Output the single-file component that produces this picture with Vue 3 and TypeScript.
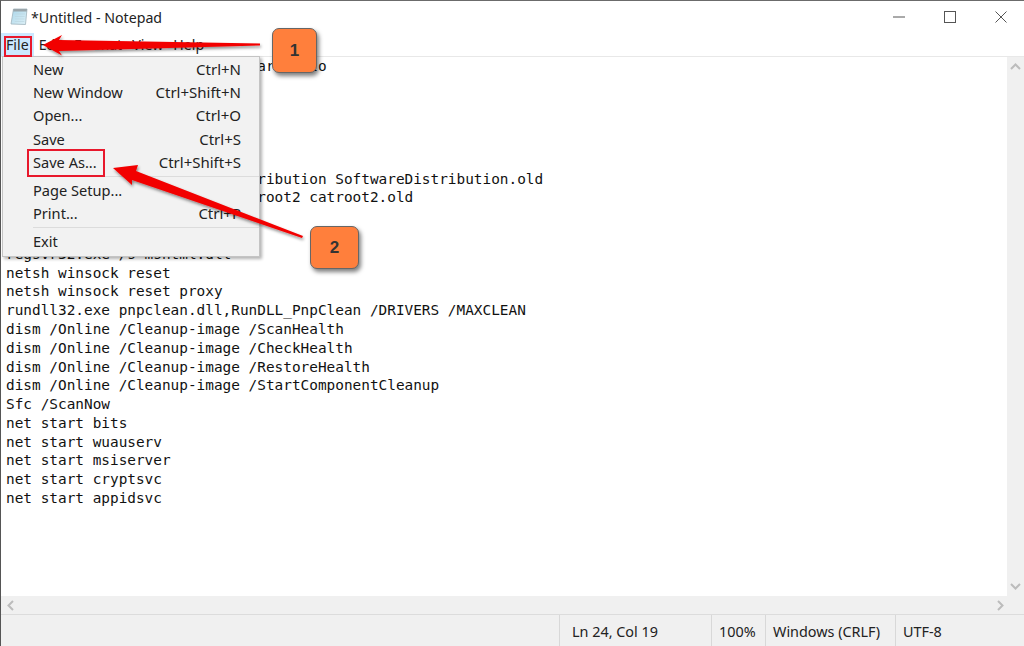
<script setup lang="ts">
const lines: string[] = [
  'SC config trustedinstaller start=auto',
  'net stop bits',
  'net stop wuauserv',
  'net stop msiserver',
  'net stop cryptsvc',
  'net stop appidsvc',
  'Ren %Systemroot%\\SoftwareDistribution SoftwareDistribution.old',
  'Ren %Systemroot%\\System32\\catroot2 catroot2.old',
  'regsvr32.exe /s atl.dll',
  'regsvr32.exe /s urlmon.dll',
  'regsvr32.exe /s mshtml.dll',
  'netsh winsock reset',
  'netsh winsock reset proxy',
  'rundll32.exe pnpclean.dll,RunDLL_PnpClean /DRIVERS /MAXCLEAN',
  'dism /Online /Cleanup-image /ScanHealth',
  'dism /Online /Cleanup-image /CheckHealth',
  'dism /Online /Cleanup-image /RestoreHealth',
  'dism /Online /Cleanup-image /StartComponentCleanup',
  'Sfc /ScanNow',
  'net start bits',
  'net start wuauserv',
  'net start msiserver',
  'net start cryptsvc',
  'net start appidsvc',
]
const menus: string[] = ['File', 'Edit', 'Format', 'View', 'Help']
interface Item { label: string; key?: string; sep?: boolean }
const items: Item[] = [
  { label: 'New', key: 'Ctrl+N' },
  { label: 'New Window', key: 'Ctrl+Shift+N' },
  { label: 'Open...', key: 'Ctrl+O' },
  { label: 'Save', key: 'Ctrl+S' },
  { label: 'Save As...', key: 'Ctrl+Shift+S', sep: true },
  { label: 'Page Setup...' },
  { label: 'Print...', key: 'Ctrl+P', sep: true },
  { label: 'Exit' },
]
</script>

<template>
  <div class="window">
    <header class="titlebar">
      <svg class="app-icon" width="18" height="18" viewBox="0 0 18 18">
        <defs>
          <linearGradient id="pad" x1="0" y1="0" x2="1" y2="1">
            <stop offset="0" stop-color="#a9d6ea" />
            <stop offset="1" stop-color="#dff1f7" />
          </linearGradient>
        </defs>
        <path d="M3.500 1h13.500l-1.500 15.500-14.500-.5z" fill="url(#pad)" stroke="#9fb4bd" stroke-width=".8" />
        <path d="M3.500 1h13.500l-.3 2.500H3.200z" fill="#9aa5aa" />
        <path d="M5.500 6h9.500M5 8.500h9.500M5 11h9.500M4.800 13.500h9.500" stroke="#bcd6e0" stroke-width=".7" />
      </svg>
      <span class="title">*Untitled - Notepad</span>
      <div class="controls">
        <svg width="12" height="12" viewBox="0 0 12 12"><path d="M0 6h12" stroke="#555" /></svg>
        <svg width="12" height="12" viewBox="0 0 12 12"><rect x=".5" y=".5" width="11" height="11" fill="none" stroke="#555" /></svg>
        <svg width="12" height="12" viewBox="0 0 12 12"><path d="M.5.5l11 11M11.500.5l-11 11" stroke="#555" /></svg>
      </div>
    </header>

    <nav class="menubar">
      <span v-for="(m, i) in menus" :key="m" class="menu-label" :class="{ active: i === 0 }">{{ m }}</span>
    </nav>

    <main class="editor">
      <div class="text-row">
        <pre class="text"><template v-for="l in lines" :key="l">{{ l }}
</template></pre>
        <div class="vscroll">
          <svg width="11" height="7" viewBox="0 0 11 7"><path d="M1 6l4.500-4.500L10 6" fill="none" stroke="#bcbcbc" stroke-width="2" /></svg>
          <svg width="11" height="7" viewBox="0 0 11 7"><path d="M1 1l4.500 4.500L10 1" fill="none" stroke="#bcbcbc" stroke-width="2" /></svg>
        </div>
      </div>
      <div class="hscroll">
        <svg width="7" height="11" viewBox="0 0 7 11"><path d="M6 1L1.500 5.500 6 10" fill="none" stroke="#bcbcbc" stroke-width="2" /></svg>
        <svg width="7" height="11" viewBox="0 0 7 11"><path d="M1 1l4.500 4.500L1 10" fill="none" stroke="#bcbcbc" stroke-width="2" /></svg>
      </div>
    </main>

    <footer class="statusbar">
      <span class="cell pos">Ln 24, Col 19</span>
      <span class="cell zoom">100%</span>
      <span class="cell eol">Windows (CRLF)</span>
      <span class="cell enc">UTF-8</span>
    </footer>

    <div class="file-menu">
      <template v-for="it in items" :key="it.label">
        <div class="item">
          <span>{{ it.label }}</span>
          <span v-if="it.key" class="key">{{ it.key }}</span>
        </div>
        <div v-if="it.sep" class="sep"></div>
      </template>
    </div>

    <div class="red-box box-file"></div>
    <div class="red-box box-save"></div>

    <svg class="arrows" width="1024" height="646" viewBox="0 0 1024 646">
      <defs>
        <filter id="shadow" x="-10%" y="-30%" width="120%" height="170%">
          <feDropShadow dx="1" dy="2" stdDeviation="1.500" flood-color="#000" flood-opacity=".45" />
        </filter>
      </defs>
      <path d="M43 45 L62 35 L59 40 L260 43.500 L260 45.500 L59 51 L62 55.500 Z" fill="#f20000" filter="url(#shadow)" />
      <path d="M113 168 L138 165 L136 171 L303 236 L302 238 L132 180 L132 185 Z" fill="#f20000" filter="url(#shadow)" />
    </svg>

    <div class="badge badge-1">1</div>
    <div class="badge badge-2">2</div>
  </div>
</template>

<style scoped>
.window {
  position: relative;
  width: 1024px;
  height: 646px;
  overflow: hidden;
  display: flex;
  flex-direction: column;
  background: #fff;
  border-top: 1px solid #6b6b6b;
  border-left: 1px solid #555;
  box-sizing: border-box;
  font-family: "Noto Sans", "Open Sans", sans-serif;
  color: #1a1a1a;
}
.titlebar {
  height: 32px;
  flex: none;
  display: flex;
  align-items: center;
  padding-left: 9px;
}
.app-icon { margin-right: 3px; }
.title { font-size: 14.2px; color: #222; }
.controls {
  margin-left: auto;
  display: flex;
  gap: 39px;
  padding-right: 17px;
  align-items: center;
}
.menubar {
  height: 23px;
  flex: none;
  display: flex;
  border-bottom: 1px solid #e8e8e8;
  font-size: 14.2px;
}
.menu-label {
  padding: 0 5px;
  line-height: 24px;
  color: #222;
}
.menu-label.active { background: #cce8ff; }
.editor {
  flex: 1;
  min-height: 0;
  display: flex;
  flex-direction: column;
}
.text-row {
  flex: 1;
  min-height: 0;
  display: flex;
}
.text {
  flex: 1;
  margin: 0;
  padding: 0 0 0 5px;
  font-family: "DejaVu Sans Mono", "Liberation Mono", monospace;
  font-size: 14.4px;
  line-height: 18.78px;
  color: #111;
  overflow: hidden;
}
.vscroll {
  width: 17px;
  flex: none;
  background: #f0f0f0;
  display: flex;
  flex-direction: column;
  justify-content: space-between;
  align-items: center;
  padding: 6px 0;
  box-sizing: border-box;
}
.hscroll {
  height: 18px;
  flex: none;
  background: #f0f0f0;
  display: flex;
  justify-content: space-between;
  align-items: center;
  padding: 0 20px 0 6px;
}
.statusbar {
  height: 31px;
  flex: none;
  display: flex;
  justify-content: flex-end;
  background: #f0f0f0;
  border-top: 1px solid #dcdcdc;
  font-size: 14.4px;
  color: #222;
}
.cell {
  border-left: 1px solid #d8d8d8;
  box-sizing: border-box;
  padding-left: 12px;
  line-height: 33px;
}
.pos { width: 152px; }
.zoom { width: 54px; padding-left: 7px; }
.eol { width: 130px; padding-left: 7px; }
.enc { width: 129px; padding-left: 7px; }
.file-menu {
  position: absolute;
  left: 1px;
  top: 55px;
  width: 258px;
  height: 201px;
  box-sizing: border-box;
  background: #f2f2f2;
  border: 1px solid #c4c4c4;
  box-shadow: 2px 2px 3px rgba(0, 0, 0, .3);
  padding: 1px 18px 0 30px;
  font-size: 14.6px;
  color: #222;
}
.item {
  height: 23.2px;
  line-height: 23.2px;
  display: flex;
  justify-content: space-between;
}
.key { font-size: 15px; }
.sep {
  height: 1px;
  margin: 2px -18px 2px 0;
  background: #dcdcdc;
}
.red-box {
  position: absolute;
  border: 2px solid #e8182c;
  box-sizing: border-box;
}
.box-file { left: 3px; top: 35px; width: 28px; height: 21px; }
.box-save { left: 26px; top: 148px; width: 78px; height: 28px; }
.arrows { position: absolute; left: -1px; top: -1px; }
.badge {
  position: absolute;
  background: #ff7f3c;
  border: 1px solid #666;
  border-radius: 7px;
  box-shadow: 2px 3px 4px rgba(0, 0, 0, .5);
  display: flex;
  align-items: center;
  justify-content: center;
  font-family: "Liberation Sans", sans-serif;
  font-weight: 700;
  font-size: 17px;
  color: #333;
  box-sizing: border-box;
}
.badge-1 { left: 271px; top: 27px; width: 45px; height: 45px; }
.badge-2 { left: 309px; top: 225px; width: 49px; height: 43px; }
</style>
